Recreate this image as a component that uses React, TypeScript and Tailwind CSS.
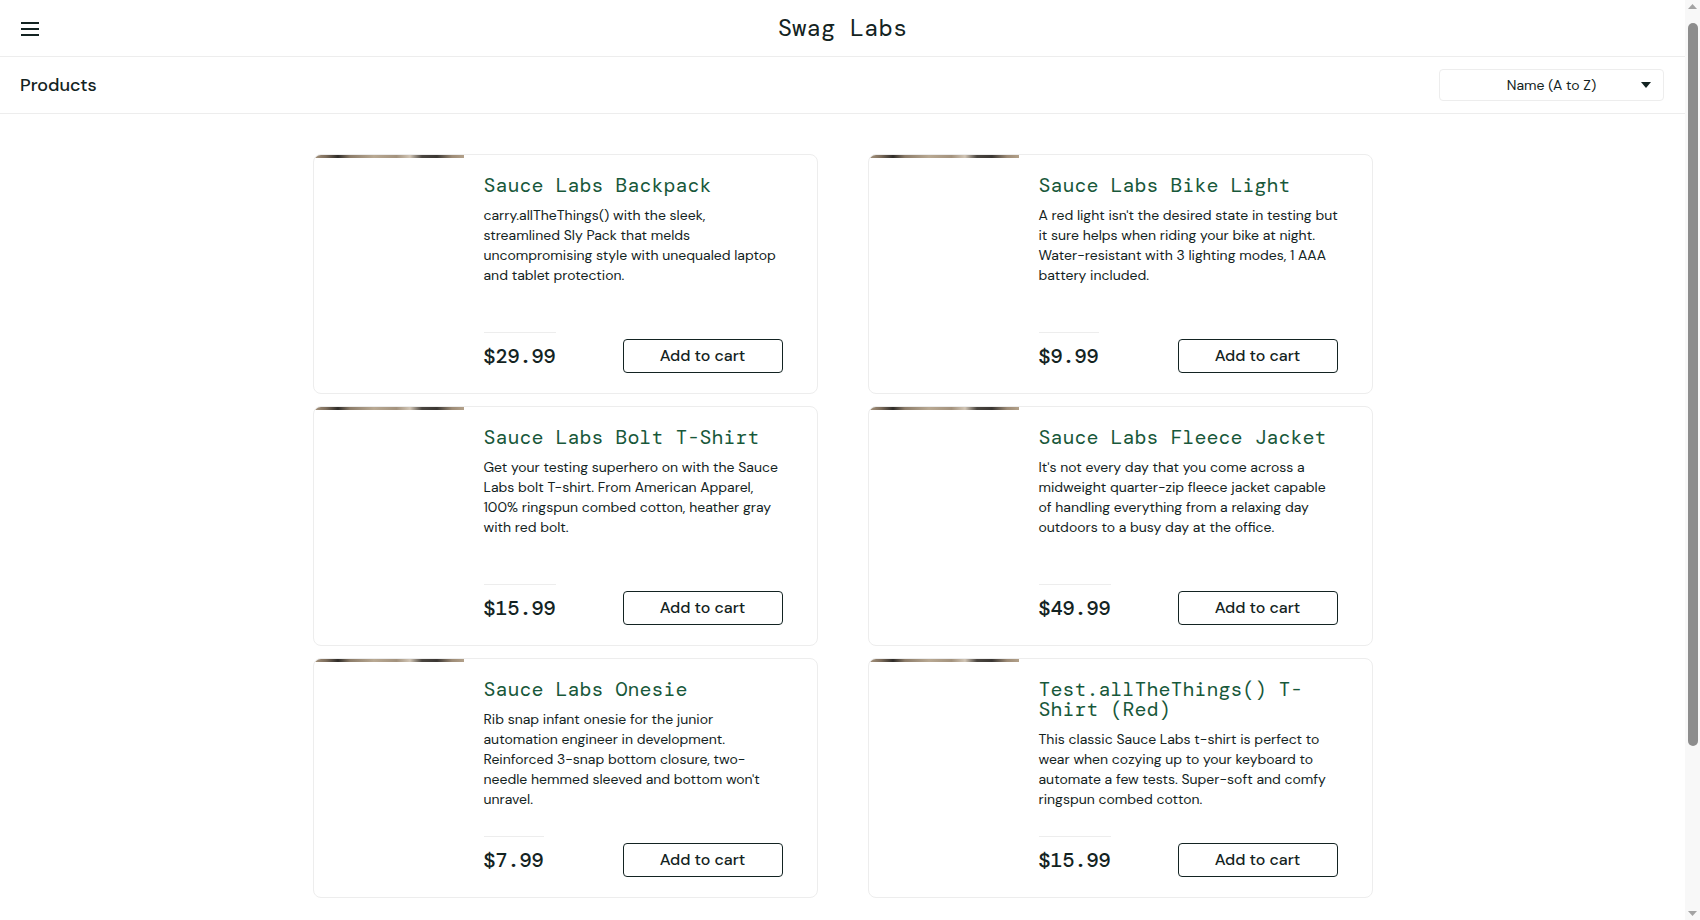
type Product = {
    name: string;
    desc: string;
    price: string;
};

const products: Product[] = [
    {
        name: "Sauce Labs Backpack",
        desc: "carry.allTheThings() with the sleek, streamlined Sly Pack that melds uncompromising style with unequaled laptop and tablet protection.",
        price: "$29.99",
    },
    {
        name: "Sauce Labs Bike Light",
        desc: "A red light isn't the desired state in testing but it sure helps when riding your bike at night. Water-resistant with 3 lighting modes, 1 AAA battery included.",
        price: "$9.99",
    },
    {
        name: "Sauce Labs Bolt T-Shirt",
        desc: "Get your testing superhero on with the Sauce Labs bolt T-shirt. From American Apparel, 100% ringspun combed cotton, heather gray with red bolt.",
        price: "$15.99",
    },
    {
        name: "Sauce Labs Fleece Jacket",
        desc: "It's not every day that you come across a midweight quarter-zip fleece jacket capable of handling everything from a relaxing day outdoors to a busy day at the office.",
        price: "$49.99",
    },
    {
        name: "Sauce Labs Onesie",
        desc: "Rib snap infant onesie for the junior automation engineer in development. Reinforced 3-snap bottom closure, two-needle hemmed sleeved and bottom won't unravel.",
        price: "$7.99",
    },
    {
        name: "Test.allTheThings() T-Shirt (Red)",
        desc: "This classic Sauce Labs t-shirt is perfect to wear when cozying up to your keyboard to automate a few tests. Super-soft and comfy ringspun combed cotton.",
        price: "$15.99",
    },
];

const mono = "font-['DM_Mono','Liberation_Mono',monospace]";
const monoBold = "font-['DM_Mono','DejaVu_Sans_Mono',monospace]";
const sans = "font-['DM_Sans',Roboto,'Liberation_Sans',sans-serif]";

const ProductCard = ({ product }: { product: Product }) => {
    return (
        <div className="flex h-[240px] overflow-hidden rounded-lg border border-[#ededed] bg-white">
            {/* image didn't load, only the top edge shows */}
            <div className="w-[150px] shrink-0">
                <div className="h-[3px] bg-[linear-gradient(90deg,#a8967f,#7d6d5c_8%,#2e2b27_16%,#8c7c69_24%,#b9a993_40%,#a3927d_55%,#d2c6b6_64%,#4a453f_72%,#3a3632_82%,#9d8b76_92%,#b3a18a)]" />
            </div>
            <div className="ml-5 flex flex-1 flex-col justify-between py-5 pr-[32px]">
                <div>
                    <h2 className={`${monoBold} text-[20px] leading-[20px] text-[#18583a]`}>
                        {product.name}
                    </h2>
                    <p className="mt-[10px] text-[14px] leading-[20px] text-[#132322]">
                        {product.desc}
                    </p>
                </div>
                <div className="flex items-end justify-between">
                    <div className={`${monoBold} border-t border-[#ededed] pt-[13px] pb-[7px] text-[20px] leading-[20px] font-medium text-[#132322]`}>
                        {product.price}
                    </div>
                    <button
                        type="button"
                        className="mr-[2px] h-[34px] w-[160px] rounded border border-[#132322] bg-white text-[16px] font-medium text-[#132322]"
                    >
                        Add to cart
                    </button>
                </div>
            </div>
        </div>
    );
};

export default function App() {
    return (
        <div className={`${sans} min-h-screen bg-white text-[#132322]`}>
            <div className="mr-[15px]">
                <header className="relative flex h-[57px] items-center justify-center border-b border-[#ededed]">
                    <button type="button" className="absolute left-[21px] top-[22px] flex flex-col gap-[4px]">
                        <span className="block h-[2px] w-[18px] bg-[#132322]" />
                        <span className="block h-[2px] w-[18px] bg-[#132322]" />
                        <span className="block h-[2px] w-[18px] bg-[#132322]" />
                    </button>
                    <div className={`${mono} text-[24px] text-[#132322]`}>Swag Labs</div>
                </header>

                <div className="flex h-[57px] items-center justify-between border-b border-[#ededed] pl-5 pr-[21px]">
                    <span className="text-[18px] font-medium">Products</span>
                    <div className="relative flex h-[32px] w-[225px] items-center justify-center rounded border border-[#ededed] pt-[1px] text-[14px]">
                        <span>Name (A to Z)</span>
                        <svg className="absolute right-[12px] top-[12px]" width="10" height="6" viewBox="0 0 10 6">
                            <path d="M0 0h10L5 6z" fill="#132322" />
                        </svg>
                    </div>
                </div>

                <main className="grid grid-cols-[505px_505px] justify-center gap-x-[50px] gap-y-[12px] pt-[40px] pb-[40px]">
                    {products.map((p) => (
                        <ProductCard key={p.name} product={p} />
                    ))}
                </main>

                <footer className="flex h-[180px] flex-col items-center justify-center gap-4 bg-[#132322] text-[14px] text-white">
                    <div className="flex gap-4">
                        <span>Twitter</span>
                        <span>Facebook</span>
                        <span>LinkedIn</span>
                    </div>
                    <span>© 2025 Sauce Labs. All Rights Reserved. Terms of Service | Privacy Policy</span>
                </footer>
            </div>

            {/* page scrollbar */}
            <div className="fixed right-0 top-0 flex h-screen w-[15px] flex-col items-center bg-[#f8f8f8]">
                <svg className="mt-[4px]" width="9" height="5" viewBox="0 0 9 5">
                    <path d="M0 5L4.5 0 9 5z" fill="#a3a3a3" />
                </svg>
                <div className="mt-[14px] h-[723px] w-[10px] rounded-[5px] bg-[#8d8d8d]" />
                <div className="flex-1" />
                <svg className="mb-[4px]" width="9" height="5" viewBox="0 0 9 5">
                    <path d="M0 0h9L4.5 5z" fill="#a3a3a3" />
                </svg>
            </div>
        </div>
    );
}
